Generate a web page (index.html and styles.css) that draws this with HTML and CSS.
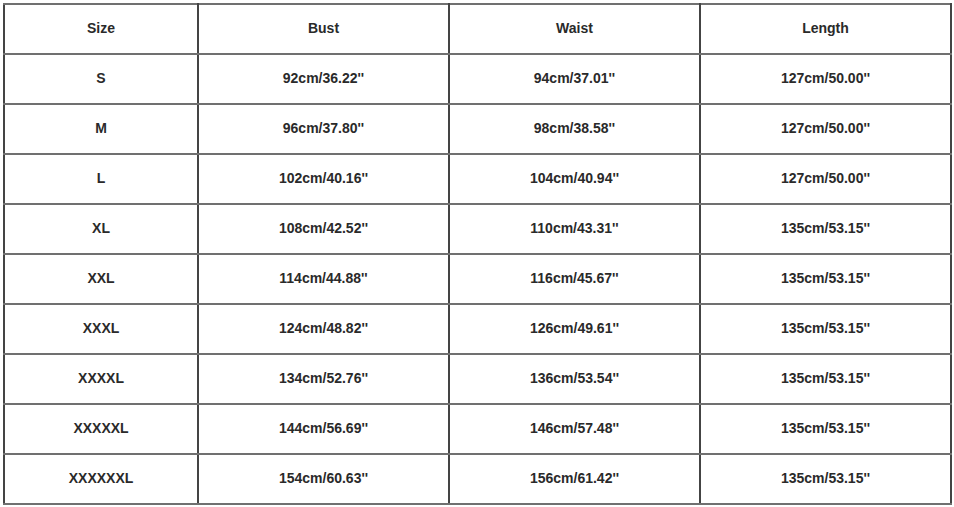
FILE: index.html
```html
<!DOCTYPE html>
<html>
<head>
<meta charset="utf-8">
<link rel="stylesheet" href="styles.css">
</head>
<body>
<table class="size-table">
  <colgroup>
    <col class="c-size">
    <col class="c-val">
    <col class="c-val">
    <col class="c-val">
  </colgroup>
  <tr><td>Size</td><td>Bust</td><td>Waist</td><td>Length</td></tr>
  <tr><td>S</td><td>92cm/36.22''</td><td>94cm/37.01''</td><td>127cm/50.00''</td></tr>
  <tr><td>M</td><td>96cm/37.80''</td><td>98cm/38.58''</td><td>127cm/50.00''</td></tr>
  <tr><td>L</td><td>102cm/40.16''</td><td>104cm/40.94''</td><td>127cm/50.00''</td></tr>
  <tr><td>XL</td><td>108cm/42.52''</td><td>110cm/43.31''</td><td>135cm/53.15''</td></tr>
  <tr><td>XXL</td><td>114cm/44.88''</td><td>116cm/45.67''</td><td>135cm/53.15''</td></tr>
  <tr><td>XXXL</td><td>124cm/48.82''</td><td>126cm/49.61''</td><td>135cm/53.15''</td></tr>
  <tr><td>XXXXL</td><td>134cm/52.76''</td><td>136cm/53.54''</td><td>135cm/53.15''</td></tr>
  <tr><td>XXXXXL</td><td>144cm/56.69''</td><td>146cm/57.48''</td><td>135cm/53.15''</td></tr>
  <tr><td>XXXXXXL</td><td>154cm/60.63''</td><td>156cm/61.42''</td><td>135cm/53.15''</td></tr>
</table>
</body>
</html>
```
FILE: styles.css
```css
html, body {
  margin: 0;
  padding: 0;
  background: #ffffff;
}
body {
  padding: 3px 0 0 3px;
}
.size-table {
  border-collapse: collapse;
  table-layout: fixed;
  width: 949px;
  height: 500px;
  font-family: "Liberation Sans", Arial, sans-serif;
  font-weight: bold;
  font-size: 14px;
  color: #2a2a2a;
}
.c-size { width: 194px; }
.c-val { width: 251px; }
.size-table td {
  text-align: center;
  vertical-align: middle;
  padding: 0 0 3px 0;
  border-top: 2px solid #707070;
  border-bottom: 2px solid #707070;
  border-left: 2px solid #444444;
  border-right: 2px solid #444444;
  height: 45px;
}
```
